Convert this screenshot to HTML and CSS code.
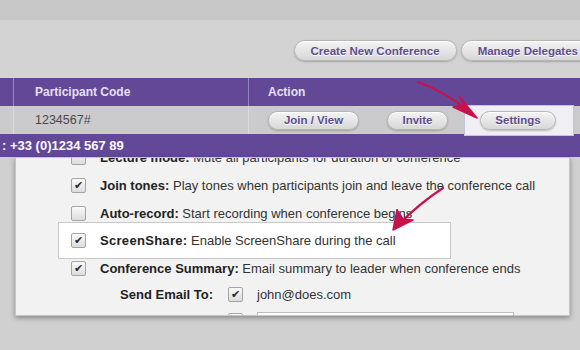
FILE: index.html
```html
<!DOCTYPE html>
<html>
<head>
<meta charset="utf-8">
<link rel="stylesheet" href="styles.css">
</head>
<body>
<div class="page">
  <div class="topbar"></div>
  <div class="toolbar">
    <button class="btn big">Create New Conference</button>
    <button class="btn big">Manage Delegates</button>
  </div>
  <div class="grid">
    <div class="row head">
      <div class="cell c1"></div>
      <div class="cell c2">Participant Code</div>
      <div class="cell c3">Action</div>
    </div>
    <div class="row data">
      <div class="cell c1"></div>
      <div class="cell c2">1234567#</div>
      <div class="cell c3">
        <button class="btn sm join">Join / View</button>
        <button class="btn sm invite">Invite</button>
        <div class="spot"><button class="btn sm settings">Settings</button></div>
      </div>
    </div>
    <div class="dialbar">: +33 (0)1234 567 89</div>
  </div>

  <div class="popup">
    <div class="list">
      <div class="opt"><span class="cb"></span><span class="txt"><b class="lbl">Lecture mode:</b> Mute all participants for duration of conference</span></div>
      <div class="opt"><span class="cb on">&#10004;</span><span class="txt"><b class="lbl">Join tones:</b> Play tones when participants join and leave the conference call</span></div>
      <div class="opt"><span class="cb"></span><span class="txt"><b class="lbl">Auto-record:</b> Start recording when conference begins</span></div>
      <div class="opt focus"><span class="cb on">&#10004;</span><span class="txt"><b class="lbl wide">ScreenShare:</b> Enable ScreenShare during the call</span></div>
      <div class="opt short"><span class="cb on">&#10004;</span><span class="txt"><b class="lbl">Conference Summary:</b> Email summary to leader when conference ends</span></div>
      <div class="mail"><b class="mlabel">Send Email To:</b><span class="cb on">&#10004;</span><span class="addr">john@does.com</span></div>
      <div class="mail extra"><span class="mlabel"></span><span class="cb"></span><span class="field"></span></div>
    </div>
  </div>

  <svg class="arrows" width="580" height="350" viewBox="0 0 580 350">
    <path d="M418 82 Q446 92 471 113" fill="none" stroke="#c8124c" stroke-width="2.2" stroke-linecap="round"/>
    <path d="M477 118 L453 107 L464 105 L459 96 Z" fill="#c8124c" stroke="#c8124c" stroke-width="1.5" stroke-linejoin="round"/>
    <path d="M443 188 Q420 203 398 225" fill="none" stroke="#c8124c" stroke-width="2.2" stroke-linecap="round"/>
    <path d="M393 230 L397 210 L403 219 L413 220 Z" fill="#c8124c" stroke="#c8124c" stroke-width="1.5" stroke-linejoin="round"/>
  </svg>
</div>
</body>
</html>
```

FILE: styles.css
```css
html, body {
  margin: 0;
  padding: 0;
}
body {
  background: #d0d0d0;
  font-family: "Liberation Sans", Arial, sans-serif;
}
.page {
  position: relative;
  width: 580px;
  height: 350px;
  overflow: hidden;
  background: #d0d0d0;
}
.topbar {
  height: 20px;
  background: #c8c8c8;
}
.toolbar {
  height: 58px;
  box-sizing: border-box;
  background: #d3d3d3;
  display: flex;
  justify-content: flex-end;
  align-items: flex-start;
  gap: 4px;
  padding-top: 20px;
  margin-right: -15px;
}
.btn {
  box-sizing: border-box;
  border: 1px solid #b6b6b6;
  border-radius: 11px;
  background: linear-gradient(#f4f4f4, #d7d7d7);
  box-shadow: 0 1px 2px rgba(0,0,0,0.22), inset 0 1px 0 #fff;
  font-family: "Liberation Sans", Arial, sans-serif;
  font-weight: bold;
  font-size: 11.5px;
  color: #5d4c90;
  text-shadow: 0 1px 0 #fff;
  padding: 0;
  text-align: center;
  white-space: nowrap;
}
.big {
  height: 21px;
  padding: 0 16px;
}
.sm {
  height: 19px;
  border-radius: 10px;
}
.join { width: 91px; margin-right: 28px; }
.invite { width: 61px; margin-right: 16px; }
.settings { width: 76px; }

.row {
  display: flex;
  height: 28px;
}
.cell {
  display: flex;
  align-items: center;
  box-sizing: border-box;
  height: 100%;
}
.c1 {
  width: 14px;
  border-right: 1px solid #9585c0;
}
.c2 {
  width: 235px;
  padding-left: 21px;
  border-right: 1px solid #9585c0;
}
.c3 {
  flex: 1;
  padding-left: 19px;
}
.head {
  background: #644898;
  color: #e4e0f1;
  font-weight: bold;
  font-size: 12px;
}
.data {
  background: #cbcbce;
  color: #4a4a4a;
  font-size: 12.5px;
}
.data .c1, .data .c2 {
  border-right-color: #dadada;
}
.spot {
  box-sizing: border-box;
  width: 110px;
  height: 31px;
  flex-shrink: 0;
  background: #f0f0f4;
  border: 1px solid #c4c4d4;
  display: flex;
  align-items: center;
  padding-left: 15px;
}
.dialbar {
  height: 23px;
  line-height: 23px;
  background: #644898;
  color: #fbfaff;
  font-weight: bold;
  font-size: 13px;
  padding-left: 2px;
}

.popup {
  position: absolute;
  left: 15px;
  top: 157px;
  width: 555px;
  height: 159px;
  box-sizing: border-box;
  background: #f2f2f2;
  border: 1px solid #c6c6c6;
  box-shadow: 0 2px 5px rgba(0,0,0,0.35);
  overflow: hidden;
  font-size: 13px;
  color: #333;
}
.list {
  margin-top: -15px;
}
.opt {
  display: flex;
  align-items: center;
  height: 28px;
  padding-left: 55px;
  gap: 14px;
  white-space: nowrap;
}
.opt.short {
  height: 26px;
}
.opt.focus {
  box-sizing: border-box;
  height: 37px;
  width: 393px;
  margin: -5px 0 -4px 42px;
  padding-left: 12px;
  background: #fff;
  border: 1px solid #c8c8c8;
}
.lbl {
  color: #222;
}
.lbl.wide {
  letter-spacing: 0.3px;
}
.cb {
  box-sizing: border-box;
  width: 15px;
  height: 15px;
  flex-shrink: 0;
  border: 1px solid #a4a4a4;
  border-radius: 2px;
  background: linear-gradient(#fafafa, #dcdcdc);
  display: flex;
  align-items: center;
  justify-content: center;
  font-family: "DejaVu Sans", sans-serif;
  font-size: 11px;
  color: #2a2a2a;
  line-height: 1;
}
.mail {
  display: flex;
  align-items: center;
  height: 26px;
  gap: 0;
}
.mlabel {
  width: 197px;
  text-align: right;
  color: #222;
  margin-right: 15px;
  flex-shrink: 0;
}
.mail .cb {
  margin-right: 14px;
}
.addr {
  color: #333;
}
.mail.extra {
  align-items: flex-start;
  padding-top: 5px;
}
.mail.extra .cb {
  margin-top: 1px;
}
.field {
  box-sizing: border-box;
  width: 257px;
  height: 22px;
  background: #fff;
  border: 1px solid #bdbdbd;
}

.arrows {
  position: absolute;
  left: 0;
  top: 0;
  pointer-events: none;
}
```
